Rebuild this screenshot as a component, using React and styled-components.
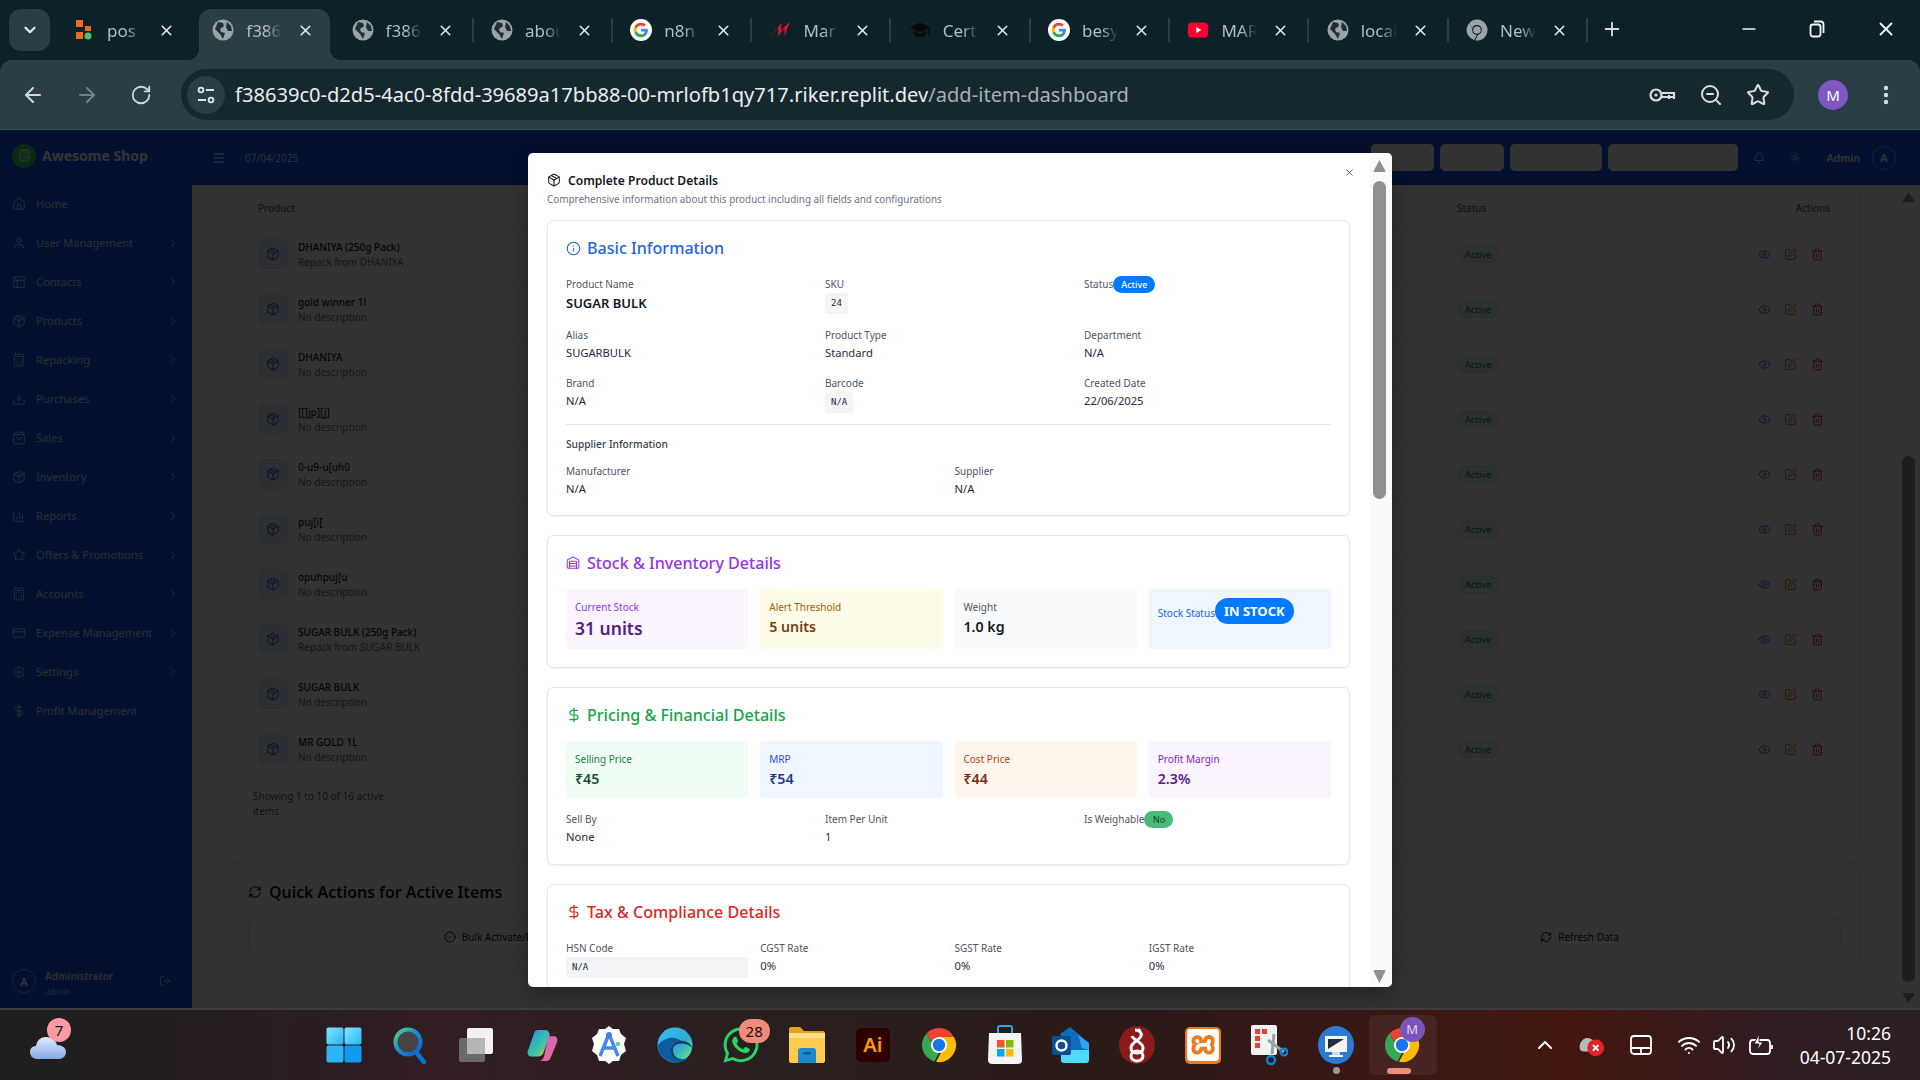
import styled, { createGlobalStyle } from 'styled-components';
import {
  ArrowLeft,
  ArrowRight,
  Bell,
  Calculator,
  ChartColumn,
  ChevronDown,
  ChevronRight,
  ChevronUp,
  CircleCheck,
  CreditCard,
  DollarSign,
  Download,
  EllipsisVertical,
  Eye,
  Home,
  Info,
  LogOut,
  Menu,
  Minus,
  Package,
  PanelsTopLeft,
  Plus,
  RefreshCw,
  RotateCw,
  Settings,
  ShoppingBag,
  SquarePen,
  Star,
  Sun,
  Trash2,
  User,
  Volume2,
  Warehouse,
  Wifi,
  X,
  ZoomOut,
} from 'lucide-react';
import { FaWhatsapp } from 'react-icons/fa';
import { SiXampp } from 'react-icons/si';

const FONT = '"Noto Sans", "Open Sans", Arial, sans-serif';

const GlobalStyle = createGlobalStyle`
  * {
    box-sizing: border-box;
  }
  html, body {
    margin: 0;
    padding: 0;
    background: #0c2228;
    font-family: ${FONT};
  }
`;

const Screen = styled.div`
  width: 1920px;
  height: 1080px;
  display: flex;
  flex-direction: column;
  overflow: hidden;
`;

/* ---------- browser chrome ---------- */

const TabStrip = styled.div`
  height: 60px;
  flex: none;
  display: flex;
  align-items: flex-end;
  background: #0c2228;
  padding-left: 9px;
`;

const TabSearch = styled.div`
  width: 41px;
  height: 42px;
  margin: 0 10px 9px 0;
  border-radius: 12px;
  background: #2a3f45;
  color: #dfe6e8;
  display: flex;
  align-items: center;
  justify-content: center;
`;

const Tab = styled.div`
  position: relative;
  width: 131px;
  height: 51px;
  margin-right: 8.3px;
  padding: 0 16px 9px 13px;
  display: flex;
  align-items: center;
  border-radius: 12px 12px 0 0;
  background: ${(props) => (props.$active ? '#2a3f45' : 'transparent')};
  ${(props) =>
    props.$active &&
    `
    &::before, &::after {
      content: '';
      position: absolute;
      bottom: 0;
      width: 12px;
      height: 12px;
    }
    &::before {
      left: -12px;
      background: radial-gradient(circle at 0 0, transparent 12px, #2a3f45 12.5px);
    }
    &::after {
      right: -12px;
      background: radial-gradient(circle at 100% 0, transparent 12px, #2a3f45 12.5px);
    }
  `}
`;

const TabSeparator = styled.span`
  position: absolute;
  right: -4px;
  top: 9px;
  width: 2px;
  height: 24px;
  background: #2a3d42;
`;

const TabIcon = styled.span`
  width: 22px;
  height: 22px;
  flex: none;
  display: flex;
  align-items: center;
  justify-content: center;
`;

const TabLabel = styled.span`
  margin-left: 12px;
  width: 36px;
  flex: none;
  overflow: hidden;
  white-space: nowrap;
  font-size: 17px;
  color: #b3bec1;
  mask-image: linear-gradient(to right, #000 55%, transparent 100%);
`;

const TabClose = styled(X)`
  margin-left: auto;
  flex: none;
  color: #e4eaec;
`;

const NewTab = styled(Plus)`
  margin: 0 0 20px 9px;
  color: #d5dcde;
`;

const WindowButtons = styled.div`
  margin: 0 23px 20px auto;
  display: flex;
  align-items: center;
  gap: 50px;
  color: #f2f5f6;
`;

const Toolbar = styled.div`
  height: 70px;
  flex: none;
  display: flex;
  align-items: center;
  background: #2a3f45;
  border-radius: 12px 12px 0 0;
  border-bottom: 1px solid #3a4d52;
  padding: 0 22px 0 21px;
`;

const NavButton = styled.span`
  width: 24px;
  height: 24px;
  margin-right: ${(props) => props.$gap || 30}px;
  color: ${(props) => (props.$off ? '#71828a' : '#cfd8da')};
  display: flex;
  align-items: center;
  justify-content: center;
`;

const Omnibox = styled.div`
  height: 51px;
  width: 1613px;
  flex: none;
  border-radius: 26px;
  background: #14282e;
  display: flex;
  align-items: center;
  padding: 0 24px 0 6px;
`;

const SiteBadge = styled.span`
  width: 38px;
  height: 38px;
  border-radius: 50%;
  background: #2a3f45;
  color: #dfe6e8;
  display: flex;
  align-items: center;
  justify-content: center;
  flex: none;
`;

const UrlText = styled.span`
  margin-left: 10px;
  font-size: 20.1px;
  color: #e8eef0;
  white-space: nowrap;
`;

const UrlPath = styled.span`
  color: #a3b1b5;
`;

const OmniIcons = styled.div`
  margin-left: auto;
  display: flex;
  align-items: center;
  gap: 23px;
  color: #d6dee0;
`;

const ProfileCircle = styled.span`
  width: 30px;
  height: 30px;
  margin-left: 24px;
  border-radius: 50%;
  background: #7e57c2;
  color: #fff;
  font-size: 15px;
  flex: none;
  display: flex;
  align-items: center;
  justify-content: center;
`;

const MenuDots = styled(EllipsisVertical)`
  margin-left: 26px;
  flex: none;
  color: #d6dee0;
`;

/* ---------- app behind the dialog ---------- */

const AppArea = styled.div`
  position: relative;
  flex: 1;
  min-height: 0;
  display: flex;
  background: #fff;
`;

const Sidebar = styled.aside`
  width: 192px;
  flex: none;
  background: #1450eb;
  color: rgba(255, 255, 255, 0.85);
  display: flex;
  flex-direction: column;
`;

const BrandRow = styled.div`
  height: 55px;
  flex: none;
  display: flex;
  align-items: center;
  padding: 0 0 4px 12px;
  gap: 6px;
`;

const BrandLogo = styled.span`
  width: 24px;
  height: 24px;
  border-radius: 50%;
  background: #2bd05e;
  color: #fff;
  display: flex;
  align-items: center;
  justify-content: center;
`;

const BrandName = styled.span`
  font-size: 14px;
  font-weight: 700;
  color: #fff;
`;

const NavList = styled.nav`
  margin-top: -1px;
  flex: 1;
`;

const NavItem = styled.div`
  height: 39px;
  display: flex;
  align-items: center;
  padding: 0 12px 0 12px;
  font-size: 11.1px;
`;

const NavLabel = styled.span`
  margin-left: 10px;
  flex: 1;
`;

const UserRow = styled.div`
  height: 55px;
  flex: none;
  display: flex;
  align-items: center;
  padding: 0 21px 0 12px;
  border-top: 1px solid rgba(255, 255, 255, 0.12);
`;

const OutlineAvatar = styled.span`
  width: 24px;
  height: 24px;
  flex: none;
  border-radius: 50%;
  border: 1px solid rgba(255, 255, 255, 0.5);
  color: #fff;
  font-size: 11px;
  font-weight: 600;
  display: flex;
  align-items: center;
  justify-content: center;
`;

const UserText = styled.div`
  margin-left: 9px;
  padding-top: 5px;
  flex: 1;
`;

const UserName = styled.div`
  font-size: 10px;
  font-weight: 600;
  line-height: 15px;
`;

const UserRole = styled.div`
  font-size: 8.5px;
  line-height: 15px;
  opacity: 0.8;
`;

const RightColumn = styled.div`
  flex: 1;
  min-width: 0;
  display: flex;
  flex-direction: column;
`;

const TopBar = styled.header`
  height: 55px;
  flex: none;
  background: #1450eb;
  color: #fff;
  display: flex;
  align-items: center;
  padding: 0 24px 0 20px;
`;

const DateText = styled.span`
  margin-left: 19px;
  font-size: 10px;
  opacity: 0.85;
`;

const HeaderButtons = styled.div`
  margin-left: auto;
  display: flex;
  gap: 6px;
`;

const HeaderButton = styled.span`
  width: ${(props) => props.$w}px;
  height: 27px;
  border-radius: 5px;
  background: #fff;
`;

const HeaderIcon = styled.span`
  display: flex;
  margin-left: ${(props) => props.$gap}px;
`;

const AdminName = styled.span`
  margin-left: 26px;
  font-size: 10.5px;
  font-weight: 600;
`;

const HeaderAvatar = styled(OutlineAvatar)`
  margin-left: 12px;
`;

const MainRow = styled.div`
  flex: 1;
  min-height: 0;
  display: flex;
`;

const Main = styled.main`
  flex: 1;
  min-width: 0;
  padding: 0 40px 0 37px;
  overflow: hidden;
`;

const TableCard = styled.section`
  height: 665px;
  border: 1px solid #e5e7eb;
  border-top: 0;
  border-radius: 0 0 7px 7px;
  padding: 0 18px 0 17px;
`;

const TableHead = styled.div`
  height: 42px;
  display: flex;
  align-items: center;
  border-bottom: 1px solid #e5e7eb;
  padding: 4px 11px 0;
  font-size: 10px;
  color: #4b5563;
`;

const ProductCell = styled.div`
  flex: 1;
  min-width: 0;
  display: flex;
  align-items: center;
`;

const StatusCell = styled.div`
  width: 249px;
  flex: none;
`;

const ActionsCell = styled.div`
  width: 124px;
  flex: none;
  display: flex;
  justify-content: flex-end;
  gap: 13.7px;
`;

const RowActions = styled(ActionsCell)`
  padding-right: 6px;
`;

const TableRow = styled.div`
  height: 55px;
  display: flex;
  align-items: center;
  border-bottom: 1px solid #e5e7eb;
  padding: 0 11px;
`;

const ProductThumb = styled.span`
  width: 30px;
  height: 30px;
  flex: none;
  border-radius: 6px;
  background: #dbeafe;
  color: #2563eb;
  display: flex;
  align-items: center;
  justify-content: center;
`;

const ProductText = styled.div`
  margin-left: 10px;
  padding-top: 1px;
`;

const ProductName = styled.div`
  font-size: 10px;
  line-height: 15px;
  font-weight: 500;
  color: #111827;
`;

const ProductDesc = styled.div`
  font-size: 10px;
  line-height: 15px;
  color: #6b7280;
`;

const ActiveBadge = styled.span`
  display: block;
  width: 42px;
  height: 17px;
  border-radius: 9px;
  background: #dcfce7;
  border: 1px solid #bbf7d0;
  color: #166534;
  font-size: 9.5px;
  line-height: 15px;
  text-align: center;
`;

const RowAction = styled.span`
  display: flex;
  color: ${(props) => props.$color};
`;

const TableFooter = styled.div`
  width: 140px;
  margin: 12px 0 0 6px;
  font-size: 10px;
  line-height: 15px;
  color: #4b5563;
`;

const ActionsCard = styled.section`
  height: 109px;
  margin-top: 13px;
  border: 1px solid #e5e7eb;
  border-radius: 7px;
  padding: 14px 18px 0 18px;
`;

const ActionsTitle = styled.h3`
  margin: 0;
  height: 28px;
  display: flex;
  align-items: center;
  gap: 7px;
  font-size: 15.9px;
  font-weight: 600;
  color: #111827;
`;

const ActionsGrid = styled.div`
  margin-top: 13px;
  display: grid;
  grid-template-columns: repeat(3, 1fr);
  gap: 12px;
`;

const ActionButton = styled.div`
  height: 35px;
  border: 1px solid #e5e7eb;
  border-radius: 5px;
  display: flex;
  align-items: center;
  justify-content: center;
  gap: 6px;
  font-size: 10px;
  color: #111827;
`;

const PageScroll = styled.div`
  width: 20px;
  flex: none;
  padding: 7px 5px 0 2px;
  display: flex;
  flex-direction: column;
`;

const ArrowUp = styled.span`
  width: 13px;
  height: ${(props) => props.$h || 10}px;
  flex: none;
  background: #8f8f8f;
  clip-path: polygon(50% 0, 100% 100%, 0 100%);
  border-radius: 2px;
`;

const ArrowDown = styled(ArrowUp)`
  clip-path: polygon(0 0, 100% 0, 50% 100%);
`;

const Thumb = styled.span`
  width: 13px;
  height: ${(props) => props.$h}px;
  margin: ${(props) => props.$top}px 0 ${(props) => props.$bottom}px;
  flex: none;
  border-radius: 7px;
  background: #8f8f8f;
`;

const Dim = styled.div`
  position: absolute;
  inset: 0;
  background: rgba(0, 0, 0, 0.8);
`;

/* ---------- dialog ---------- */

const Dialog = styled.div`
  position: absolute;
  left: 528px;
  top: 23px;
  width: 864px;
  height: 834px;
  background: #fff;
  border-radius: 5px;
  box-shadow: 0 8px 20px rgba(0, 0, 0, 0.3);
  display: flex;
  overflow: hidden;
`;

const DialogBody = styled.div`
  position: relative;
  flex: 1;
  min-width: 0;
  padding: 17px 20px 0 19px;
`;

const DialogClose = styled(X)`
  position: absolute;
  right: 15px;
  top: 14px;
  color: #4b5563;
`;

const DialogTitle = styled.h2`
  margin: 0;
  height: 20px;
  display: flex;
  align-items: center;
  gap: 7px;
  font-size: 12.1px;
  font-weight: 600;
  color: #111827;
`;

const DialogSub = styled.p`
  margin: 1px 0 13px;
  height: 16px;
  font-size: 9.9px;
  line-height: 16px;
  color: #6b7280;
`;

const CardStack = styled.div`
  display: flex;
  flex-direction: column;
  gap: 19px;
`;

const Card = styled.section`
  border: 1px solid #e5e7eb;
  border-radius: 6px;
  box-shadow: 0 1px 2px rgba(0, 0, 0, 0.06);
  padding: 16px 18px ${(props) => props.$pb || 17}px;
`;

const CardTitle = styled.h3`
  margin: 0 0 ${(props) => props.$mb || 17}px;
  height: 22px;
  display: flex;
  align-items: center;
  gap: ${(props) => props.$gap || 7}px;
  font-size: 16.1px;
  font-weight: 500;
  color: ${(props) => props.$color};
`;

const FieldGrid = styled.div`
  display: grid;
  grid-template-columns: repeat(${(props) => props.$cols}, 1fr);
  gap: 13px 12px;
`;

const Field = styled.div`
  min-width: 0;
`;

const InlineField = styled.div`
  display: flex;
  align-items: flex-start;
`;

const Label = styled.div`
  font-size: 10px;
  line-height: 17px;
  color: #4b5563;
`;

const Value = styled.div`
  font-size: 11.2px;
  line-height: 18px;
  color: #1f2937;
`;

const StrongValue = styled.div`
  font-size: 13px;
  line-height: 21px;
  font-weight: 600;
  color: #111827;
`;

const CodeChip = styled.div`
  width: ${(props) => (props.$block ? 'auto' : 'fit-content')};
  height: 21px;
  padding: 0 6px;
  border-radius: 3px;
  background: #f3f4f6;
  font-family: "DejaVu Sans Mono", "Liberation Mono", monospace;
  font-size: 9px;
  line-height: 21px;
  color: #1f2937;
`;

const Pill = styled.span`
  height: 17px;
  min-width: 29px;
  padding: 0 8px;
  border-radius: 9px;
  background: ${(props) => props.$bg};
  color: ${(props) => props.$color};
  font-size: 9px;
  font-weight: 500;
  line-height: 17px;
  text-align: center;
  flex: none;
`;

const Divider = styled.div`
  height: 1px;
  margin: 11px 0 11px;
  background: #e5e7eb;
`;

const SubHead = styled.div`
  margin-bottom: 10px;
  font-size: 10.2px;
  line-height: 17px;
  font-weight: 500;
  color: #374151;
`;

const TileGrid = styled.div`
  display: grid;
  grid-template-columns: repeat(4, 1fr);
  gap: 12px;
`;

const Tile = styled.div`
  padding: 10px 9px 9px;
  border-radius: 3px;
  background: ${(props) => props.$bg};
`;

const TileLabel = styled.div`
  font-size: 10px;
  line-height: 17px;
  color: ${(props) => props.$color};
`;

const TileValue = styled.div`
  font-size: ${(props) => props.$size || 14.2}px;
  line-height: ${(props) => (props.$size ? 24 : 21)}px;
  font-weight: 600;
  color: ${(props) => props.$color};
`;

const StockTile = styled(Tile)`
  padding-top: 9px;
  display: flex;
  align-items: flex-start;
`;

const StockLabel = styled(TileLabel)`
  margin-top: 7px;
`;

const StockBadge = styled.span`
  height: 26px;
  padding: 0 9px;
  border-radius: 13px;
  background: #007bff;
  color: #fff;
  font-size: 13px;
  font-weight: 700;
  line-height: 26px;
  flex: none;
`;

const PricingRow = styled(FieldGrid)`
  margin-top: 13px;
`;

const DialogScroll = styled.div`
  width: 22px;
  flex: none;
  background: #fafafa;
  padding: 7px 6px 0 3px;
  display: flex;
  flex-direction: column;
`;

/* ---------- windows taskbar ---------- */

const Taskbar = styled.footer`
  height: 72px;
  flex: none;
  display: flex;
  align-items: center;
  border-top: 2px solid #3d3a3b;
  padding: 0 29px 0 15px;
  background: linear-gradient(
    90deg,
    #1e1e1f 0%,
    #2b1d22 18%,
    #321d22 22%,
    #2a1f1f 40%,
    #2a1a18 58%,
    #3d1714 76%,
    #43160f 82%,
    #301c20 92%,
    #2a1e24 100%
  );
`;

const TaskSlot = styled.div`
  position: relative;
  width: 66.1px;
  height: 60px;
  flex: none;
  display: flex;
  align-items: center;
  justify-content: center;
  ${(props) =>
    props.$active &&
    `
    background: rgba(255, 255, 255, 0.06);
    border-radius: 6px;
    box-shadow: 3px 0 0 -1px rgba(255, 255, 255, 0.05);
  `}
`;

const TaskIcons = styled.div`
  margin-left: 230px;
  display: flex;
`;

const CountBadge = styled.span`
  position: absolute;
  top: ${(props) => props.$top || 2}px;
  left: ${(props) => props.$left}px;
  min-width: ${(props) => props.$w || 24}px;
  height: 24px;
  padding: 0 3px;
  border-radius: 12px;
  background: ${(props) => props.$bg};
  color: #111;
  font-size: 15px;
  line-height: 24px;
  text-align: center;
`;

const RunningDot = styled.span`
  position: absolute;
  bottom: 1px;
  left: 30px;
  width: 7px;
  height: 7px;
  border-radius: 50%;
  background: #9a9a9a;
`;

const RunningPill = styled.span`
  position: absolute;
  bottom: 1px;
  left: 18px;
  width: 24px;
  height: 6px;
  border-radius: 3px;
  background: #f28b7a;
`;

const ProfileDot = styled.span`
  position: absolute;
  top: 2px;
  left: 31px;
  width: 25px;
  height: 25px;
  border-radius: 50%;
  background: #7a55b8;
  color: #e0d6f2;
  font-size: 13px;
  line-height: 25px;
  text-align: center;
`;

const Tray = styled.div`
  margin-left: auto;
  display: flex;
  align-items: center;
  color: #fff;
`;

const TrayItem = styled.span`
  width: ${(props) => props.$w || 26}px;
  margin-left: ${(props) => props.$gap}px;
  display: flex;
  justify-content: center;
`;

const Clock = styled.div`
  margin-left: 24px;
  width: 93px;
  text-align: right;
  white-space: nowrap;
  color: #fff;
  font-size: 17.5px;
  line-height: 24px;
`;

/* ---------- drawn icons ---------- */

function Globe() {
  return (
    <svg width="22" height="22" viewBox="0 0 22 22">
      <circle cx="11" cy="11" r="10.5" fill="#9aa4a8" />
      <path
        d="M6 3 L11 4 L12 7 L8 10 L9 13 L13 14 L11 20 L8 15 L3 10 Z M15 3 L19 7 L20 12 L16 12 L14 8 Z"
        fill="#1d3137"
      />
    </svg>
  );
}

function GoogleG({ size = 26 }) {
  return (
    <svg width={size} height={size} viewBox="0 0 26 26">
      <circle cx="13" cy="13" r="13" fill="#fff" />
      <g transform="translate(3.6 3.6) scale(0.78)">
        <path fill="#4285F4" d="M22.56 12.25c0-.78-.07-1.53-.2-2.25H12v4.26h5.92c-.26 1.37-1.04 2.53-2.21 3.31v2.77h3.57c2.08-1.92 3.28-4.74 3.28-8.09z" />
        <path fill="#34A853" d="M12 23c2.97 0 5.46-.98 7.28-2.66l-3.57-2.77c-.98.66-2.23 1.06-3.71 1.06-2.86 0-5.29-1.93-6.16-4.53H2.18v2.84C3.99 20.53 7.7 23 12 23z" />
        <path fill="#FBBC05" d="M5.84 14.09c-.22-.66-.35-1.36-.35-2.09s.13-1.43.35-2.09V7.07H2.18C1.43 8.55 1 10.22 1 12s.43 3.45 1.18 4.93l3.66-2.84z" />
        <path fill="#EA4335" d="M12 5.38c1.62 0 3.06.56 4.21 1.64l3.15-3.15C17.45 2.09 14.97 1 12 1 7.7 1 3.99 3.47 2.18 7.07l3.66 2.84c.87-2.6 3.3-4.53 6.16-4.53z" />
      </g>
    </svg>
  );
}

function PosIcon() {
  return (
    <svg width="20" height="22" viewBox="0 0 20 22">
      <rect x="2" y="1" width="7" height="7" fill="#f26a1b" />
      <rect x="11" y="7" width="6" height="5" fill="#f26a1b" />
      <rect x="2" y="13" width="7" height="7" fill="#f26a1b" />
      <circle cx="14" cy="17" r="3.5" fill="#4fc36b" />
    </svg>
  );
}

function MarIcon() {
  return (
    <svg width="26" height="22" viewBox="0 0 26 22">
      <path d="M1 20 C6 14 11 7 15 2 L14 12 C17 8 21 4 25 2 C22 7 20 12 19 19 L18 9 C15 12 13 15 11 19 L11 8 C8 12 5 16 1 20 Z" fill="#e4122d" />
    </svg>
  );
}

function CapIcon() {
  return (
    <svg width="26" height="24" viewBox="0 0 26 24">
      <path d="M13 3 L25 9 L13 15 L1 9 Z" fill="#0a0a0a" />
      <path d="M6 13 V18 C9 21 17 21 20 18 V13 L13 17 Z" fill="#0a0a0a" />
      <rect x="23" y="9" width="1.4" height="9" fill="#0a0a0a" />
    </svg>
  );
}

function YouTubeIcon() {
  return (
    <svg width="26" height="22" viewBox="0 0 26 22">
      <rect x="1" y="2" width="24" height="18" rx="5" fill="#ff0033" />
      <path d="M11 7.5 L17 11 L11 14.5 Z" fill="#fff" />
    </svg>
  );
}

function ChromeMark({ size = 36, red = '#ea4335', green = '#34a853', yellow = '#fbbc05', mid = '#1a73e8', ring = '#fff' }) {
  return (
    <svg width={size} height={size} viewBox="0 0 36 36">
      <path d="M18 1 A17 17 0 0 1 33 10 L18 10 A8 8 0 0 0 10.5 15 L5.5 6.5 A17 17 0 0 1 18 1 Z" fill={red} />
      <path d="M5.5 6.5 L14 21.5 A8 8 0 0 0 18 26 L13.4 34.4 A17 17 0 0 1 5.5 6.5 Z" fill={green} />
      <path d="M33 10 A17 17 0 0 1 15 34.8 L22 22 A8 8 0 0 0 24 13 L18 10 Z" fill={yellow} />
      <circle cx="18" cy="18" r="8" fill={ring} />
      <circle cx="18" cy="18" r="6.2" fill={mid} />
    </svg>
  );
}

function KeyIcon() {
  return (
    <svg width="28" height="24" viewBox="0 0 28 24" fill="none" stroke="currentColor" strokeWidth="2.2">
      <circle cx="8" cy="12" r="5.5" />
      <circle cx="8" cy="12" r="1.6" fill="currentColor" stroke="none" />
      <path d="M13.5 10 H26 V16 M21 12 V16 M14 14 H26" />
    </svg>
  );
}

function SiteControls() {
  return (
    <svg width="20" height="20" viewBox="0 0 20 20" fill="none" stroke="currentColor" strokeWidth="1.8">
      <circle cx="5" cy="5" r="2.4" />
      <path d="M10 5 H18 M2 15 H10" />
      <circle cx="15" cy="15" r="2.4" />
    </svg>
  );
}

function RestoreIcon() {
  return (
    <svg width="16" height="18" viewBox="0 0 16 18" fill="none" stroke="currentColor" strokeWidth="1.8">
      <rect x="1.5" y="4.5" width="10" height="12" rx="2.5" />
      <path d="M5 1.5 H11.5 A3 3 0 0 1 14.5 4.5 V13" />
    </svg>
  );
}

function StartIcon() {
  return (
    <svg width="36" height="36" viewBox="0 0 36 36">
      <defs>
        <linearGradient id="winTop" x1="0" y1="0" x2="1" y2="1">
          <stop offset="0" stopColor="#7fe8ff" />
          <stop offset="1" stopColor="#27b4f8" />
        </linearGradient>
      </defs>
      <rect x="0.5" y="0.5" width="17" height="17" rx="2" fill="url(#winTop)" />
      <rect x="18.5" y="0.5" width="17" height="17" rx="2" fill="url(#winTop)" />
      <rect x="0.5" y="18.5" width="17" height="17" rx="2" fill="#2cb5f9" />
      <rect x="18.5" y="18.5" width="17" height="17" rx="2" fill="#0f9af0" />
    </svg>
  );
}

function SearchIcon() {
  return (
    <svg width="38" height="38" viewBox="0 0 38 38">
      <defs>
        <linearGradient id="lens" x1="0" y1="0" x2="1" y2="1">
          <stop offset="0" stopColor="#53d48e" />
          <stop offset="0.5" stopColor="#1089d8" />
          <stop offset="1" stopColor="#0b63c5" />
        </linearGradient>
      </defs>
      <circle cx="17" cy="16" r="12.5" fill="#4a4346" stroke="url(#lens)" strokeWidth="4" />
      <path d="M25 26 L33 36" stroke="#0d6fcf" strokeWidth="4.5" strokeLinecap="round" />
    </svg>
  );
}

function TaskViewIcon() {
  return (
    <svg width="36" height="36" viewBox="0 0 36 36">
      <rect x="1" y="11" width="26" height="24" rx="2" fill="#6a6a6a" />
      <rect x="9" y="1" width="26" height="26" rx="2" fill="#f1f1f1" />
      <rect x="9" y="11" width="18" height="16" fill="#b5b5b5" />
    </svg>
  );
}

function CopilotIcon() {
  return (
    <svg width="33" height="33" viewBox="0 0 36 36">
      <defs>
        <linearGradient id="copA" x1="0" y1="0" x2="1" y2="1">
          <stop offset="0" stopColor="#1f8fe8" />
          <stop offset="0.6" stopColor="#3fc3a5" />
          <stop offset="1" stopColor="#f7c23a" />
        </linearGradient>
        <linearGradient id="copB" x1="0" y1="0" x2="1" y2="1">
          <stop offset="0" stopColor="#b667e0" />
          <stop offset="0.6" stopColor="#e566a8" />
          <stop offset="1" stopColor="#f57c3d" />
        </linearGradient>
      </defs>
      <path d="M13 1 H21 C24 1 25 3 26 6 L19 26 C18 29 16 30 13 30 H6 C3 30 1 28 2 24 L9 4 C10 2 11 1 13 1 Z" fill="url(#copA)" />
      <path d="M24 8 H30 C33 8 35 10 34 14 L27 31 C26 34 24 35 21 35 H15 C18 34 19 32 20 29 Z" fill="url(#copB)" />
    </svg>
  );
}

function StudioIcon() {
  return (
    <svg width="36" height="38" viewBox="0 0 36 38">
      <path d="M18 0 L22 3 L28 3 L30 8 L35 12 L33 18 L35 25 L30 29 L28 35 L22 35 L18 38 L14 35 L8 35 L6 29 L1 25 L3 18 L1 12 L6 8 L8 3 L14 3 Z" fill="#fff" />
      <path d="M18 8 L9 30 M18 8 L27 30 M12 22 H24" stroke="#4285f4" strokeWidth="3.4" fill="none" />
      <circle cx="18" cy="9" r="3" fill="#3f7fe0" />
      <circle cx="27" cy="18" r="2.2" fill="#3ddc84" />
    </svg>
  );
}

function EdgeIcon() {
  return (
    <svg width="36" height="36" viewBox="0 0 36 36">
      <defs>
        <linearGradient id="edgeA" x1="0" y1="0" x2="1" y2="0.9">
          <stop offset="0" stopColor="#35c1f1" />
          <stop offset="0.6" stopColor="#2fa9d9" />
          <stop offset="1" stopColor="#66eb6e" />
        </linearGradient>
      </defs>
      <circle cx="18" cy="18" r="17.5" fill="url(#edgeA)" />
      <path d="M1 18 C1 28 9 35.5 19 35.5 C24 35.5 28 34 31 31 C22 34 14 29 14 22 C14 17 18 14 24 14 C20 9 8 9 1 18 Z" fill="#0c59a4" />
      <path d="M16 23 C16 17 22 16 28 17 C33 18 35 21 35 21 C34 16 28 13 22 14 C17 15 13 19 14 25 C15 30 20 33 24 34 C19 31 16 28 16 23 Z" fill="#1b3c5a" />
    </svg>
  );
}

function ExplorerIcon() {
  return (
    <svg width="36" height="36" viewBox="0 0 36 36">
      <path d="M0 2 C0 1 1 0 2 0 H11 L15 4 H34 C35 4 36 5 36 6 V10 H0 Z" fill="#e8a21b" />
      <rect x="0" y="6" width="36" height="30" rx="2" fill="#ffcb4c" />
      <rect x="0" y="6" width="36" height="5" fill="#ffe08a" />
      <path d="M9 24 C9 22 10 21 12 21 H24 C26 21 27 22 27 24 V36 H9 Z" fill="#1a8ad0" />
      <rect x="14" y="25" width="8" height="2.4" rx="1" fill="#0e5f99" />
    </svg>
  );
}

const AiTile = styled.span`
  width: 34px;
  height: 34px;
  border-radius: 5px;
  background: #300000;
  color: #ff9a00;
  font-size: 20px;
  font-weight: 600;
  line-height: 34px;
  text-align: center;
`;

function StoreIcon() {
  return (
    <svg width="36" height="40" viewBox="0 0 36 40">
      <path d="M11 8 V3 C11 1.5 12 1 13 1 H23 C24 1 25 1.5 25 3 V8" fill="none" stroke="#2ea7e0" strokeWidth="2" />
      <path d="M2 8 H34 L35 35 C35 38 33 39 31 39 H5 C3 39 1 38 1 35 Z" fill="#f4f4f4" />
      <rect x="10" y="15" width="7.5" height="7.5" fill="#f35325" />
      <rect x="19" y="15" width="7.5" height="7.5" fill="#81bc06" />
      <rect x="10" y="24" width="7.5" height="7.5" fill="#05a6f0" />
      <rect x="19" y="24" width="7.5" height="7.5" fill="#ffba08" />
    </svg>
  );
}

function OutlookIcon() {
  return (
    <svg width="38" height="38" viewBox="0 0 38 38">
      <path d="M18 1 L37 17 V24 L22 30 L8 8 Z" fill="#0f6cbd" />
      <path d="M26 9 L37 17 V24 L30 22 Z" fill="#28a8ea" />
      <path d="M9 24 H37 V34 C37 36 36 37 34 37 H12 C10 37 9 36 9 34 Z" fill="#50d9ff" />
      <rect x="0" y="10" width="19" height="19" rx="2" fill="#0a4f95" />
      <circle cx="9.5" cy="19.5" r="5" fill="none" stroke="#fff" strokeWidth="2.4" />
    </svg>
  );
}

function WampIcon() {
  return (
    <svg width="36" height="38" viewBox="0 0 36 38">
      <ellipse cx="18" cy="19" rx="18" ry="19" fill="#8b1a1a" />
      <g fill="none" stroke="#fff" strokeWidth="3">
        <path d="M16 4 C21 4 23 7 22 10 C21 14 12 16 12 22 C12 26 15 27 18 27 C21 27 24 26 24 22 C24 16 14 14 13 10" />
        <ellipse cx="18" cy="30" rx="6" ry="5" />
      </g>
      <circle cx="20" cy="4.5" r="2" fill="#fff" />
    </svg>
  );
}

const XamppTile = styled.span`
  width: 36px;
  height: 37px;
  border-radius: 5px;
  background: #ec7a20;
  color: #fff;
  display: flex;
  align-items: center;
  justify-content: center;
`;

function SnipIcon() {
  return (
    <svg width="38" height="42" viewBox="0 0 38 42">
      <rect x="1" y="1" width="26" height="30" rx="2" fill="#f2f2f2" />
      <rect x="5" y="5" width="5" height="5" fill="#e5432f" />
      <rect x="12" y="5" width="5" height="5" fill="#e5432f" />
      <rect x="5" y="12" width="5" height="5" fill="#e5432f" />
      <rect x="5" y="19" width="5" height="5" fill="#e5432f" />
      <path d="M24 10 L22 30 M18 16 L34 28" stroke="#9aa1a6" strokeWidth="3" />
      <circle cx="21" cy="36" r="4" fill="none" stroke="#0a84d8" strokeWidth="2.4" />
      <circle cx="34" cy="28" r="3.4" fill="none" stroke="#0a84d8" strokeWidth="2.4" />
    </svg>
  );
}

function RemoteIcon() {
  return (
    <svg width="36" height="38" viewBox="0 0 36 38">
      <ellipse cx="18" cy="19" rx="18" ry="19" fill="#2a7bd1" />
      <path d="M7 10 H29 V26 H7 Z" fill="#f5f5f5" />
      <path d="M10 13 H26 L10 23 Z" fill="#1d2f45" />
      <rect x="14" y="26" width="8" height="3" fill="#cfd8e3" />
      <rect x="11" y="29" width="14" height="2" fill="#f5f5f5" />
    </svg>
  );
}

function WeatherIcon() {
  return (
    <svg width="36" height="30" viewBox="0 0 36 30">
      <defs>
        <linearGradient id="cloud" x1="0" y1="0" x2="0" y2="1">
          <stop offset="0" stopColor="#dfe9fb" />
          <stop offset="1" stopColor="#86a9ea" />
        </linearGradient>
      </defs>
      <rect x="22" y="0" width="9" height="9" fill="#e8741a" />
      <path d="M7 29 C2 29 0 25 0 22 C0 18 3 16 6 16 C7 10 11 7 16 7 C22 7 26 11 27 15 C32 15 36 18 36 22 C36 26 33 29 29 29 Z" fill="url(#cloud)" />
    </svg>
  );
}

function CloudError() {
  return (
    <svg width="30" height="26" viewBox="0 0 30 26">
      <path d="M6 20 C2 20 1 16 2 13 C3 7 9 4 13 6 C16 7 18 10 18 13 L16 20 Z" fill="#b9b9b9" />
      <circle cx="19" cy="16" r="9" fill="#e0242a" />
      <path d="M16 13 L22 19 M22 13 L16 19" stroke="#fff" strokeWidth="2" />
    </svg>
  );
}

function TouchpadIcon() {
  return (
    <svg width="24" height="24" viewBox="0 0 24 24" fill="none" stroke="currentColor" strokeWidth="1.8">
      <rect x="2" y="3" width="20" height="18" rx="3" />
      <path d="M2 15 H22 M12 15 V21" />
    </svg>
  );
}

function BatteryIcon() {
  return (
    <svg width="26" height="24" viewBox="0 0 26 24" fill="none" stroke="currentColor" strokeWidth="1.8">
      <rect x="2" y="7" width="20" height="14" rx="3" />
      <path d="M24 12 V16" />
      <path d="M11 1 L6 11 H11 L9 18 L15 9 H11 Z" fill="currentColor" stroke="#2c1b1e" strokeWidth="1" />
    </svg>
  );
}

/* ---------- data ---------- */

const TABS = [
  { title: 'pos', icon: <PosIcon /> },
  { title: 'f38639c0', icon: <Globe />, active: true },
  { title: 'f38639c0', icon: <Globe />, sep: true },
  { title: 'about', icon: <Globe />, sep: true },
  { title: 'n8n', icon: <GoogleG />, sep: true },
  { title: 'Mar', icon: <MarIcon />, sep: true },
  { title: 'Cert', icon: <CapIcon />, sep: true },
  { title: 'besy', icon: <GoogleG />, sep: true },
  { title: 'MAR', icon: <YouTubeIcon />, sep: true },
  { title: 'local', icon: <Globe />, sep: true },
  {
    title: 'New',
    icon: <ChromeMark size={24} red="#9aa4a8" green="#9aa4a8" yellow="#9aa4a8" mid="#9aa4a8" ring="#0c2228" />,
    sep: true,
  },
];

const NAV = [
  { label: 'Home', Icon: Home },
  { label: 'User Management', Icon: User, sub: true },
  { label: 'Contacts', Icon: PanelsTopLeft, sub: true },
  { label: 'Products', Icon: Package, sub: true },
  { label: 'Repacking', Icon: Calculator, sub: true },
  { label: 'Purchases', Icon: Download, sub: true },
  { label: 'Sales', Icon: ShoppingBag, sub: true },
  { label: 'Inventory', Icon: Package, sub: true },
  { label: 'Reports', Icon: ChartColumn, sub: true },
  { label: 'Offers & Promotions', Icon: Star, sub: true },
  { label: 'Accounts', Icon: Calculator, sub: true },
  { label: 'Expense Management', Icon: CreditCard, sub: true },
  { label: 'Settings', Icon: Settings, sub: true },
  { label: 'Profit Management', Icon: DollarSign },
];

const PRODUCTS = [
  ['DHANIYA (250g Pack)', 'Repack from DHANIYA'],
  ['gold winner 1l', 'No description'],
  ['DHANIYA', 'No description'],
  ['[[]jp][j]', 'No description'],
  ['0-u9-u[uh0', 'No description'],
  ['puj[i[', 'No description'],
  ['opuhpuj[u', 'No description'],
  ['SUGAR BULK (250g Pack)', 'Repack from SUGAR BULK'],
  ['SUGAR BULK', 'No description'],
  ['MR GOLD 1L', 'No description'],
];

export default function App() {
  return (
    <Screen>
      <GlobalStyle />

      <TabStrip>
        <TabSearch>
          <ChevronDown size={18} strokeWidth={3} />
        </TabSearch>
        {TABS.map((tab, i) => (
          <Tab key={i} $active={tab.active}>
            <TabIcon>{tab.icon}</TabIcon>
            <TabLabel>{tab.title}</TabLabel>
            <TabClose size={17} strokeWidth={2.2} />
            {tab.sep && <TabSeparator />}
          </Tab>
        ))}
        <NewTab size={22} strokeWidth={2} />
        <WindowButtons>
          <Minus size={20} strokeWidth={2} />
          <RestoreIcon />
          <X size={22} strokeWidth={2} />
        </WindowButtons>
      </TabStrip>

      <Toolbar>
        <NavButton><ArrowLeft size={24} strokeWidth={2} /></NavButton>
        <NavButton $off><ArrowRight size={24} strokeWidth={2} /></NavButton>
        <NavButton $gap={28}><RotateCw size={22} strokeWidth={2} /></NavButton>
        <Omnibox>
          <SiteBadge><SiteControls /></SiteBadge>
          <UrlText>
            f38639c0-d2d5-4ac0-8fdd-39689a17bb88-00-mrlofb1qy717.riker.replit.dev
            <UrlPath>/add-item-dashboard</UrlPath>
          </UrlText>
          <OmniIcons>
            <KeyIcon />
            <ZoomOut size={24} strokeWidth={2} />
            <Star size={24} strokeWidth={2} />
          </OmniIcons>
        </Omnibox>
        <ProfileCircle>M</ProfileCircle>
        <MenuDots size={24} strokeWidth={2.4} />
      </Toolbar>

      <AppArea>
        <Sidebar>
          <BrandRow>
            <BrandLogo><Calculator size={13} /></BrandLogo>
            <BrandName>Awesome Shop</BrandName>
          </BrandRow>
          <NavList>
            {NAV.map(({ label, Icon, sub }) => (
              <NavItem key={label}>
                <Icon size={14} strokeWidth={1.6} />
                <NavLabel>{label}</NavLabel>
                {sub && <ChevronRight size={14} strokeWidth={1.6} />}
              </NavItem>
            ))}
          </NavList>
          <UserRow>
            <OutlineAvatar>A</OutlineAvatar>
            <UserText>
              <UserName>Administrator</UserName>
              <UserRole>admin</UserRole>
            </UserText>
            <LogOut size={12} strokeWidth={1.6} />
          </UserRow>
        </Sidebar>

        <RightColumn>
          <TopBar>
            <Menu size={14} strokeWidth={2} />
            <DateText>07/04/2025</DateText>
            <HeaderButtons>
              <HeaderButton $w={63} />
              <HeaderButton $w={64} />
              <HeaderButton $w={92} />
              <HeaderButton $w={130} />
            </HeaderButtons>
            <HeaderIcon $gap={15}><Bell size={12} strokeWidth={1.6} /></HeaderIcon>
            <HeaderIcon $gap={24}><Sun size={12} strokeWidth={1.6} /></HeaderIcon>
            <AdminName>Admin</AdminName>
            <HeaderAvatar>A</HeaderAvatar>
          </TopBar>
          <MainRow>
            <Main>
              <TableCard>
                <TableHead>
                  <ProductCell>Product</ProductCell>
                  <StatusCell>Status</StatusCell>
                  <ActionsCell>Actions</ActionsCell>
                </TableHead>
                {PRODUCTS.map(([name, desc]) => (
                  <TableRow key={name}>
                    <ProductCell>
                      <ProductThumb><Package size={14} strokeWidth={1.8} /></ProductThumb>
                      <ProductText>
                        <ProductName>{name}</ProductName>
                        <ProductDesc>{desc}</ProductDesc>
                      </ProductText>
                    </ProductCell>
                    <StatusCell><ActiveBadge>Active</ActiveBadge></StatusCell>
                    <RowActions>
                      <RowAction $color="#2563eb"><Eye size={13} strokeWidth={1.8} /></RowAction>
                      <RowAction $color="#ea580c"><SquarePen size={13} strokeWidth={1.8} /></RowAction>
                      <RowAction $color="#dc2626"><Trash2 size={13} strokeWidth={1.8} /></RowAction>
                    </RowActions>
                  </TableRow>
                ))}
                <TableFooter>Showing 1 to 10 of 16 active items</TableFooter>
              </TableCard>
              <ActionsCard>
                <ActionsTitle>
                  <RefreshCw size={14} />
                  Quick Actions for Active Items
                </ActionsTitle>
                <ActionsGrid>
                  <ActionButton>
                    <CircleCheck size={12} />
                    Bulk Activate/Deactivate
                  </ActionButton>
                  <ActionButton />
                  <ActionButton>
                    <RefreshCw size={12} />
                    Refresh Data
                  </ActionButton>
                </ActionsGrid>
              </ActionsCard>
            </Main>
            <PageScroll>
              <ArrowUp />
              <Thumb $top={254} $bottom={11} $h={526} />
              <ArrowDown />
            </PageScroll>
          </MainRow>
        </RightColumn>

        <Dim />

        <Dialog>
          <DialogBody>
            <DialogClose size={11} strokeWidth={2} />
            <DialogTitle>
              <Package size={14} strokeWidth={1.8} />
              Complete Product Details
            </DialogTitle>
            <DialogSub>Comprehensive information about this product including all fields and configurations</DialogSub>

            <CardStack>
              <Card>
                <CardTitle $color="#2563eb" $gap={6}>
                  <Info size={15} strokeWidth={1.8} />
                  Basic Information
                </CardTitle>
                <FieldGrid $cols={3}>
                  <Field>
                    <Label>Product Name</Label>
                    <StrongValue>SUGAR BULK</StrongValue>
                  </Field>
                  <Field>
                    <Label>SKU</Label>
                    <CodeChip>24</CodeChip>
                  </Field>
                  <InlineField>
                    <Label>Status</Label>
                    <Pill $bg="#007bff" $color="#fff">Active</Pill>
                  </InlineField>
                  <Field>
                    <Label>Alias</Label>
                    <Value>SUGARBULK</Value>
                  </Field>
                  <Field>
                    <Label>Product Type</Label>
                    <Value>Standard</Value>
                  </Field>
                  <Field>
                    <Label>Department</Label>
                    <Value>N/A</Value>
                  </Field>
                  <Field>
                    <Label>Brand</Label>
                    <Value>N/A</Value>
                  </Field>
                  <Field>
                    <Label>Barcode</Label>
                    <CodeChip>N/A</CodeChip>
                  </Field>
                  <Field>
                    <Label>Created Date</Label>
                    <Value>22/06/2025</Value>
                  </Field>
                </FieldGrid>
                <Divider />
                <SubHead>Supplier Information</SubHead>
                <FieldGrid $cols={2}>
                  <Field>
                    <Label>Manufacturer</Label>
                    <Value>N/A</Value>
                  </Field>
                  <Field>
                    <Label>Supplier</Label>
                    <Value>N/A</Value>
                  </Field>
                </FieldGrid>
              </Card>

              <Card $pb={18}>
                <CardTitle $color="#9333ea" $mb={15}>
                  <Warehouse size={14} strokeWidth={1.8} />
                  Stock &amp; Inventory Details
                </CardTitle>
                <TileGrid>
                  <Tile $bg="#faf5ff">
                    <TileLabel $color="#9333ea">Current Stock</TileLabel>
                    <TileValue $size={17.5} $color="#581c87">31 units</TileValue>
                  </Tile>
                  <Tile $bg="#fefce8">
                    <TileLabel $color="#a16207">Alert Threshold</TileLabel>
                    <TileValue $color="#713f12">5 units</TileValue>
                  </Tile>
                  <Tile $bg="#f9fafb">
                    <TileLabel $color="#4b5563">Weight</TileLabel>
                    <TileValue $color="#111827">1.0 kg</TileValue>
                  </Tile>
                  <StockTile $bg="#eff6ff">
                    <StockLabel $color="#2563eb">Stock Status</StockLabel>
                    <StockBadge>IN STOCK</StockBadge>
                  </StockTile>
                </TileGrid>
              </Card>

              <Card $pb={18}>
                <CardTitle $color="#16a34a" $mb={15} $gap={5}>
                  <DollarSign size={16} strokeWidth={1.8} />
                  Pricing &amp; Financial Details
                </CardTitle>
                <TileGrid>
                  <Tile $bg="#f0fdf4">
                    <TileLabel $color="#15803d">Selling Price</TileLabel>
                    <TileValue $color="#14532d">₹45</TileValue>
                  </Tile>
                  <Tile $bg="#eff6ff">
                    <TileLabel $color="#1d4ed8">MRP</TileLabel>
                    <TileValue $color="#1e3a8a">₹54</TileValue>
                  </Tile>
                  <Tile $bg="#fff7ed">
                    <TileLabel $color="#c2410c">Cost Price</TileLabel>
                    <TileValue $color="#7c2d12">₹44</TileValue>
                  </Tile>
                  <Tile $bg="#faf5ff">
                    <TileLabel $color="#7e22ce">Profit Margin</TileLabel>
                    <TileValue $color="#581c87">2.3%</TileValue>
                  </Tile>
                </TileGrid>
                <PricingRow $cols={3}>
                  <Field>
                    <Label>Sell By</Label>
                    <Value>None</Value>
                  </Field>
                  <Field>
                    <Label>Item Per Unit</Label>
                    <Value>1</Value>
                  </Field>
                  <InlineField>
                    <Label>Is Weighable</Label>
                    <Pill $bg="#48bb78" $color="#14532d">No</Pill>
                  </InlineField>
                </PricingRow>
              </Card>

              <Card>
                <CardTitle $color="#dc2626" $gap={5}>
                  <DollarSign size={16} strokeWidth={1.8} />
                  Tax &amp; Compliance Details
                </CardTitle>
                <FieldGrid $cols={4}>
                  <Field>
                    <Label>HSN Code</Label>
                    <CodeChip $block>N/A</CodeChip>
                  </Field>
                  <Field>
                    <Label>CGST Rate</Label>
                    <Value>0%</Value>
                  </Field>
                  <Field>
                    <Label>SGST Rate</Label>
                    <Value>0%</Value>
                  </Field>
                  <Field>
                    <Label>IGST Rate</Label>
                    <Value>0%</Value>
                  </Field>
                </FieldGrid>
              </Card>
            </CardStack>
          </DialogBody>
          <DialogScroll>
            <ArrowUp $h={12} />
            <Thumb $top={9} $bottom={471} $h={318} />
            <ArrowDown $h={13} />
          </DialogScroll>
        </Dialog>
      </AppArea>

      <Taskbar>
        <TaskSlot>
          <WeatherIcon />
          <CountBadge $left={32} $top={3} $bg="#ff9aa2">7</CountBadge>
        </TaskSlot>
        <TaskIcons>
          <TaskSlot><StartIcon /></TaskSlot>
          <TaskSlot><SearchIcon /></TaskSlot>
          <TaskSlot><TaskViewIcon /></TaskSlot>
          <TaskSlot><CopilotIcon /></TaskSlot>
          <TaskSlot><StudioIcon /></TaskSlot>
          <TaskSlot><EdgeIcon /></TaskSlot>
          <TaskSlot>
            <FaWhatsapp size={40} color="#25d366" />
            <CountBadge $left={31} $top={4} $w={31} $bg="#f28b7a">28</CountBadge>
          </TaskSlot>
          <TaskSlot><ExplorerIcon /></TaskSlot>
          <TaskSlot><AiTile>Ai</AiTile></TaskSlot>
          <TaskSlot><ChromeMark /></TaskSlot>
          <TaskSlot><StoreIcon /></TaskSlot>
          <TaskSlot><OutlookIcon /></TaskSlot>
          <TaskSlot><WampIcon /></TaskSlot>
          <TaskSlot><XamppTile><SiXampp size={32} /></XamppTile></TaskSlot>
          <TaskSlot><SnipIcon /></TaskSlot>
          <TaskSlot>
            <RemoteIcon />
            <RunningDot />
          </TaskSlot>
          <TaskSlot $active>
            <ChromeMark />
            <ProfileDot>M</ProfileDot>
            <RunningPill />
          </TaskSlot>
        </TaskIcons>
        <Tray>
          <TrayItem $gap={0} $w={24}><ChevronUp size={24} strokeWidth={2} /></TrayItem>
          <TrayItem $gap={21} $w={28}><CloudError /></TrayItem>
          <TrayItem $gap={22}><TouchpadIcon /></TrayItem>
          <TrayItem $gap={22}><Wifi size={24} strokeWidth={2} /></TrayItem>
          <TrayItem $gap={9}><Volume2 size={24} strokeWidth={1.8} /></TrayItem>
          <TrayItem $gap={11}><BatteryIcon /></TrayItem>
          <Clock>
            10:26
            <br />
            04-07-2025
          </Clock>
        </Tray>
      </Taskbar>
    </Screen>
  );
}
